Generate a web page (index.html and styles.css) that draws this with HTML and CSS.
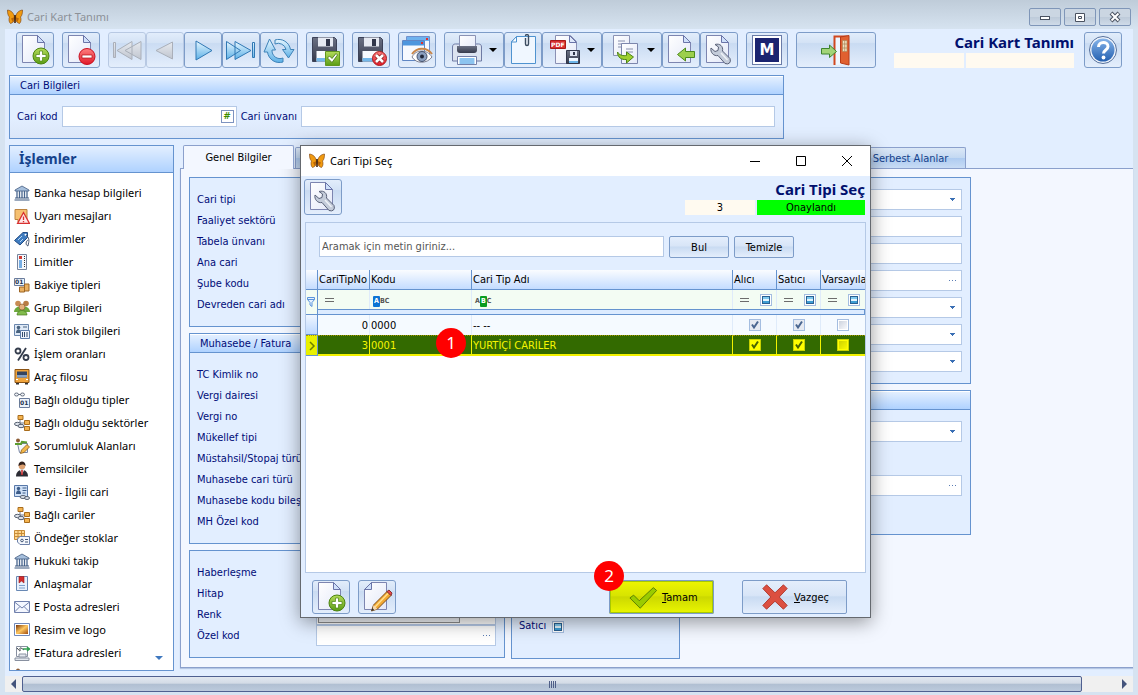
FILE: index.html
```html
<!DOCTYPE html>
<html lang="tr">
<head>
    <meta charset="UTF-8">
    <meta name="viewport" content="width=device-width, initial-scale=1.0">
    <title>Cari Kart Tanımı</title>
    <link rel="stylesheet" href="styles.css">
</head>
<body>

<!-- icon sprite -->
<svg class="sprite" aria-hidden="true">
    <defs>
        <linearGradient id="gPage" x1="0" y1="0" x2="1" y2="1"><stop offset="0" stop-color="#fff"/><stop offset="1" stop-color="#e3e8f8"/></linearGradient>
        <linearGradient id="gBlue" x1="0" y1="0" x2="0" y2="1"><stop offset="0" stop-color="#e6f6ff"/><stop offset="1" stop-color="#5cb0e6"/></linearGradient>
        <linearGradient id="gGray" x1="0" y1="0" x2="0" y2="1"><stop offset="0" stop-color="#e8eaee"/><stop offset="1" stop-color="#bcc1ca"/></linearGradient>
        <linearGradient id="gGreen" x1="0" y1="0" x2="0" y2="1"><stop offset="0" stop-color="#b4dc5a"/><stop offset="1" stop-color="#5a9c14"/></linearGradient>
        <linearGradient id="gRed" x1="0" y1="0" x2="0" y2="1"><stop offset="0" stop-color="#ff8080"/><stop offset="1" stop-color="#e01828"/></linearGradient>
        <linearGradient id="gDark" x1="0" y1="0" x2="0" y2="1"><stop offset="0" stop-color="#6b7184"/><stop offset="1" stop-color="#353a4c"/></linearGradient>
        <linearGradient id="gHelp" x1="0" y1="0" x2="0" y2="1"><stop offset="0" stop-color="#86b4ea"/><stop offset="1" stop-color="#2460b0"/></linearGradient>
        <linearGradient id="gSun" x1="0" y1="0" x2="1" y2="1"><stop offset="0" stop-color="#7a3408"/><stop offset=".5" stop-color="#ffc860"/><stop offset="1" stop-color="#a04c10"/></linearGradient>
    </defs>
    <symbol id="butterfly" viewBox="0 0 16 16">
        <path d="M7.500 8C6.500 3.500 4 1.500 .5 1c0 3 .3 5.500 2 7C1.500 10 2 13.500 3.500 14.500 6 14 7 12 7.500 10z" fill="#f09a10" stroke="#7a3c08" stroke-width=".6"/>
        <path d="M8.500 8C9.500 3.500 12 1.500 15.500 1c0 3-.3 5.500-2 7 1 2 .5 5.500-1 6.500C10 14 9 12 8.500 10z" fill="#f09a10" stroke="#7a3c08" stroke-width=".6"/>
        <path d="M4 9.500 7.500 8 6 13.500zM12 9.500 8.500 8l1.500 5.500z" fill="#b86408"/>
        <path d="M8 6v8" stroke="#402008" stroke-width="1.600"/>
    </symbol>
    <symbol id="page" viewBox="0 0 32 32">
        <path d="M3.500 1.500h15l7 7v20h-22z" fill="url(#gPage)" stroke="#7d85b0"/>
        <path d="M18.500 1.500v7h7z" fill="#cfe0fa" stroke="#6a74a8"/>
    </symbol>
    <symbol id="page-add" viewBox="0 0 32 32">
        <use href="#page"/>
        <circle cx="22" cy="22" r="8" fill="url(#gGreen)" stroke="#4c8410"/>
        <path d="M20.500 17h3v3.500H27v3h-3.500V27h-3v-3.500H17v-3h3.500z" fill="#fff" stroke="#4c8410" stroke-width=".7"/>
    </symbol>
    <symbol id="page-del" viewBox="0 0 32 32">
        <use href="#page"/>
        <circle cx="22" cy="22.500" r="8" fill="url(#gRed)" stroke="#c81020"/>
        <path d="M17 21h10v3H17z" fill="#fff" stroke="#b01018" stroke-width=".7"/>
    </symbol>
    <symbol id="first" viewBox="0 0 32 32">
        <path d="M2.500 8.500h2v15h-2zM21 7.500v18L6 16.500zM30 7.500v18L14 16.500z" fill="url(#gGray)" stroke="#a4a9b2"/>
    </symbol>
    <symbol id="prev" viewBox="0 0 32 32"><path d="M23.500 8v17L7 16.500z" fill="url(#gGray)" stroke="#a4a9b2"/></symbol>
    <symbol id="next" viewBox="0 0 32 32"><path d="M9 7v19l16-9.500z" fill="url(#gBlue)" stroke="#3078b4"/></symbol>
    <symbol id="last" viewBox="0 0 32 32"><path d="M1.500 7.500v18l14-9zM10 7.500v18l16-9zM27.500 8.500h2v15h-2z" fill="url(#gBlue)" stroke="#3078b4"/></symbol>
    <symbol id="refresh" viewBox="0 0 32 32">
        <path d="M12 6a12 12 0 0 1 15.500 9.500H31l-5.500 8.500-6-8.500h3.500A8 8 0 0 0 12 10z" fill="url(#gBlue)" stroke="#3f83b8"/>
        <path d="M20 28A12 12 0 0 1 4.500 18H1l5.500-13 6 11H9a8 8 0 0 0 11 8z" fill="url(#gBlue)" stroke="#3f83b8"/>
    </symbol>
    <symbol id="disk" viewBox="0 0 32 32">
        <path d="M3.500 3.500h22l2 2v22h-24z" fill="url(#gDark)" stroke="#3c4258"/>
        <path d="M9 3.500h15v9H9z" fill="#e6eaf2"/><path d="M17 5h4v7h-4z" fill="#30364a"/>
        <path d="M7.500 17h17v10.500h-17z" fill="#f8fbff"/><path d="M7.500 24h17v3.500h-17z" fill="#74b8ea"/>
    </symbol>
    <symbol id="disk-ok" viewBox="0 0 32 32">
        <use href="#disk"/>
        <path d="M16.500 17.500h14v14h-14z" fill="url(#gGreen)" stroke="#62961e"/>
        <path d="m18.500 24 2-2 2.500 2.500 4-5 1.500 1.500-5.500 7.500z" fill="#fff" stroke="#3f6c10" stroke-width=".8"/>
    </symbol>
    <symbol id="disk-no" viewBox="0 0 32 32">
        <use href="#disk"/>
        <circle cx="24.500" cy="24.500" r="7" fill="url(#gRed)" stroke="#a81c1c"/>
        <path d="m21 21 7 7m0-7-7 7" stroke="#8c2020" stroke-width="4.200"/><path d="m21 21 7 7m0-7-7 7" stroke="#fff" stroke-width="2.600"/>
    </symbol>
    <symbol id="preview" viewBox="0 0 32 32">
        <path d="M5.500 2.500h23v20h-23z" fill="#f4f8ff" stroke="#6f90cc"/><path d="M6 3h22v4H6z" fill="#6fb2ee"/><path d="M25 4h2v2h-2z" fill="#e03030"/>
        <path d="M1.500 6.500h22v20h-22z" fill="#f6f9ff" stroke="#5f86c4"/><path d="M2 7h21v4.500H2z" fill="#4d96de"/><path d="M20 8h2v2h-2z" fill="#e03030"/>
        <path d="M11 23c4-8 15-8 20 0-5 7-16 7-20 0z" fill="#fff" stroke="#7d7f90"/>
        <path d="M11 20c5-7 15-7 20 0" fill="none" stroke="#c8864a" stroke-width="2"/>
        <circle cx="21" cy="22.500" r="5" fill="#8ba0c0" stroke="#44506c"/><circle cx="21" cy="22.500" r="2" fill="#20283c"/>
    </symbol>
    <symbol id="printer" viewBox="0 0 32 32">
        <path d="M1.500 13c0-2 1-3 3-3h23c2 0 3 1 3 3v14h-29z" fill="#dce3f0" stroke="#6f7ba4"/>
        <path d="M8.500 1.500h16v14h-16z" fill="url(#gPage)" stroke="#8a92b4"/>
        <path d="M6 12h20v4q0 3-3 3H9q-3 0-3-3z" fill="url(#gDark)"/>
        <path d="M6.500 22.500h19v8h-19z" fill="#fff" stroke="#7480a8"/><path d="M8.500 24h15v6h-15z" fill="#8cc4f0"/>
    </symbol>
    <symbol id="clip" viewBox="0 0 32 32">
        <path d="M9.500 2.500h19v27h-24v-22z" fill="#f0f7ff" stroke="#4f93d0"/><path d="M4.500 8h5V2.500z" fill="#fff" stroke="#4f93d0"/>
        <path d="M18.500 4v6q0 1.500 1.500 1.500t1.500-1.500V2q0-1.500-1.500-1.500T18.500 2" fill="none" stroke="#3c4c60" stroke-width="1.400"/>
    </symbol>
    <symbol id="pdf" viewBox="0 0 32 32">
        <path d="M6.500 1.500h15l6 6v22h-21z" fill="url(#gPage)" stroke="#8a90b4"/><path d="M20.500 1.500v7h7z" fill="#dfe8fa" stroke="#6a74a8"/>
        <path d="M1.500 6.500h15v8h-15z" fill="#d83030" stroke="#a81818"/>
        <path d="M17.500 16.500h13v13h-13z" fill="url(#gDark)" stroke="#30364a"/><path d="M21 17h7v5h-7z" fill="#dfe5f2"/><path d="M24 18h2v3h-2z" fill="#30364a"/><path d="M20 24h9v5h-9z" fill="#eef6ff"/><path d="M20 27h9v2h-9z" fill="#6cb4e8"/>
    </symbol>
    <symbol id="copy" viewBox="0 0 32 32">
        <path d="M4.500 1.500h16v20h-16z" fill="url(#gPage)" stroke="#8a92b4"/><path d="M9 7h7M9 10h5M9 13h5" stroke="#8890ac"/>
        <path d="M12.500 9.500h16v20h-16z" fill="url(#gPage)" stroke="#7c86ac"/><path d="M17 15h7M17 18h7" stroke="#8890ac"/>
        <path d="M8.500 18c2 3.500 6 4 9 3.500V18l7 5-7 6v-3.500c-5 .5-9-2-9-7.500z" fill="#9ed030" stroke="#4c8414"/>
    </symbol>
    <symbol id="page-in" viewBox="0 0 32 32">
        <use href="#page"/><path d="M12.500 20.500 20.500 14v3.500h9v6h-9V27z" fill="#9ccf4c" stroke="#4c8a1c"/>
    </symbol>
    <symbol id="page-tool" viewBox="0 0 32 32">
        <use href="#page"/>
        <path d="M8 14l4 3.500 3-1 .5-3.500-3.500-2.500c5-1.500 8.500 2 7.500 6.500l7.500 7.500q1 3-.5 4.500t-4.500 .5l-7-8c-4 1-8-3-7-7.500z" fill="#c4ccda" stroke="#596178"/>
        <path d="m18 19 6.500 7" stroke="#eef1f6" stroke-width="1.500"/>
    </symbol>
    <symbol id="page-edit" viewBox="0 0 32 32">
        <path d="M10.500 1.500h15v27h-22v-20z" fill="url(#gPage)" stroke="#7d85b0"/><path d="M3.500 8.500h7v-7z" fill="#cfe0fa" stroke="#6a74a8"/>
        <path d="m10.500 30 2-6L26 10.500l4 4L16.500 28z" fill="#f2a832" stroke="#7c4c18"/><path d="M26 10.500l2-1.500 3 3-1 2.500z" fill="#e8484c" stroke="#8c3030"/><path d="M14 26 27 12.500" stroke="#ffe090" stroke-width="1.400"/><path d="m12.500 24 4 4-5 1.500z" fill="#f6d8b0"/><path d="m10.500 30 .8-3 2 2z" fill="#333"/>
    </symbol>
    <symbol id="exit" viewBox="0 0 32 32">
        <path d="M14.500 31V2.500h12V30" fill="#eef6ff" stroke="#d04820" stroke-width="2"/>
        <path d="M20.500 3 29 1.500V31l-8.500-2z" fill="#e06030" stroke="#b83c18"/><path d="M22.500 6.500h4.500v11h-4.500z" fill="#f0e2c0" stroke="#a88050" stroke-width=".6"/><path d="M24.700 6.500v11M22.500 10h4.500M22.500 14h4.500" stroke="#a88050" stroke-width=".7"/>
        <path d="M1.500 14.500h8V11l7 6.500-7 6V20h-8z" fill="#a2d478" stroke="#3f8430"/>
    </symbol>
    <symbol id="help" viewBox="0 0 32 32">
        <circle cx="16" cy="16" r="13.500" fill="#eef3fb" stroke="#55709c"/><circle cx="16" cy="16" r="11.500" fill="url(#gHelp)"/>
        <path d="M11.500 13c0-6 9.500-6 9.500-.5 0 3.500-4.500 3.500-4.500 7" fill="none" stroke="#fff" stroke-width="3"/><circle cx="16.500" cy="23.500" r="1.900" fill="#fff"/>
    </symbol>
    <symbol id="tick" viewBox="0 0 32 32"><path d="m2 17 4-3 6 6L27 6l3.500 3L13 28z" fill="#9acb00" stroke="#567c00"/></symbol>
    <symbol id="cross" viewBox="0 0 32 32"><path d="M3 7 7 3l9 8.500L25 3l4 4-8.500 9 8.500 9-4 4-9-8.500L7 29l-4-4 8.500-9z" fill="#dc4f40" stroke="#b0382c"/></symbol>
    <symbol id="funnel" viewBox="0 0 10 12"><path d="M1.500 1.500h7v2L6 6.500v4L4 9V6.500l-2.500-3zM1.500 3.500h7" fill="#e4f0ff" stroke="#5a94dc"/></symbol>

    <!-- sidebar, 16px -->
    <symbol id="s-bank" viewBox="0 0 16 16"><path d="M1 6V5l7-4 7 4v1z" fill="#a6bfdc" stroke="#425c80" stroke-width=".8"/><path d="M3 6v7M5.500 6v7M8 6v7M10.500 6v7M13 6v7" stroke="#48668e" stroke-width="1.300"/><path d="M1 13h14M.5 15h15" stroke="#38547c"/></symbol>
    <symbol id="s-warn" viewBox="0 0 16 16"><path d="M1 1.500h12v10H7L4 14v-2.500H1z" fill="#f6c070" stroke="#bc8440"/><path d="m9.500 4.500 6 11h-12z" fill="#ffe8e8" stroke="#d83030" stroke-width="1.300"/><path d="M9.500 8.500v3.500M9.500 13v1.300" stroke="#d83030" stroke-width="1.300"/></symbol>
    <symbol id="s-tag" viewBox="0 0 16 16"><path d="M.5 9.500 9 1.500h4.500v5L6 14z" fill="#3f7cc0" stroke="#234c84"/><circle cx="11.500" cy="3.800" r="1" fill="#fff"/><path d="m4 9 4-4M6 11l3-3" stroke="#b8d8f6"/><path d="M12 4c5 4 2 9 2 11-3-1-2-5 0-6" fill="none" stroke="#4a5872"/></symbol>
    <symbol id="s-limit" viewBox="0 0 16 16"><path d="M3.500.5h9v15h-9z" fill="#f4f7fc" stroke="#76849c"/><path d="M5 2h3v3H5z" fill="#d43c34"/><path d="M5 6h3v8H5z" fill="#76aee4"/><path d="M10.500 2v12" stroke="#333" stroke-dasharray="1 1"/></symbol>
    <symbol id="s-balance" viewBox="0 0 16 16"><path d="M.5 1.500h10v7H.5z" fill="#eef3fa" stroke="#6a7c9c"/><path d="M5.500 10h5v5h-5zM10.500 7h4.500v7h-4.500z" fill="#eab060" stroke="#9c6424"/></symbol>
    <symbol id="s-group" viewBox="0 0 16 16"><circle cx="4" cy="3.500" r="2.800" fill="#c88c54"/><circle cx="12" cy="3.500" r="2.800" fill="#b87c44"/><path d="M0 12c0-8 16-8 16 0z" fill="#6ca83c"/><circle cx="8" cy="7" r="3" fill="#e4b07c" stroke="#8c5c30" stroke-width=".7"/><path d="M3 15c0-6 10-6 10 0z" fill="#82bc4c" stroke="#4c7c24" stroke-width=".7"/></symbol>
    <symbol id="s-stock" viewBox="0 0 16 16"><path d="M.5 1.500h14v11H.5z" fill="#dfe9f6" stroke="#6a86ac"/><circle cx="4.500" cy="4.500" r="1.800" fill="#48627e"/><path d="M2 10c0-5 5-5 5 0z" fill="#48627e"/><path d="M9 4h4" stroke="#48627e"/><path d="M6.500 7.500h9v8h-9z" fill="#eef4fc" stroke="#5c7ca8"/><path d="M8.500 9v5M10.500 9v5M13 9v5" stroke="#344c6c"/></symbol>
    <symbol id="s-percent" viewBox="0 0 16 16"><g fill="none" stroke="#343c4c" stroke-width="1.800"><circle cx="4" cy="5" r="2.500"/><circle cx="12" cy="11.500" r="2.500"/><path d="M12 2 4 14.500"/></g></symbol>
    <symbol id="s-bus" viewBox="0 0 16 16"><path d="M1 .5h14v13H1z" fill="#f0a43c" stroke="#8c5414"/><path d="M3 2.500h10v6H3z" fill="#344460"/><path d="M3 6h10v2.500H3z" fill="#84a0c4"/><path d="M2 10.500h2M12 10.500h2" stroke="#fff"/><path d="M2 14h3v1.500H2zM11 14h3v1.500h-3z" fill="#333"/></symbol>
    <symbol id="s-link" viewBox="0 0 16 16"><g fill="#eef0f4" stroke="#667080"><ellipse cx="2.500" cy="2.500" rx="2" ry="1.500"/><ellipse cx="8.500" cy="2.500" rx="2" ry="1.500"/><path d="M4 2.500h3"/></g><path d="M5.500 6.500h10v9h-10z" fill="#eef3fa" stroke="#6a7c9c"/></symbol>
    <symbol id="s-sector" viewBox="0 0 16 16"><path d="M6 5v3h6M6 8v4h6" fill="none" stroke="#707888"/><g fill="#f4b450" stroke="#a86c1c"><path d="M4 .5h5v4H4zM10.500 5.500h5v4h-5zM10.500 11.500h5v4h-5z"/></g><g fill="#dde2ea" stroke="#566070"><ellipse cx="3.500" cy="9" rx="3" ry="1.700"/><ellipse cx="7" cy="11" rx="3" ry="1.700"/></g></symbol>
    <symbol id="s-area" viewBox="0 0 16 16"><path d="M3.500 5.500h10v9h-8z" fill="#f4f7fc" stroke="#7886a4"/><circle cx="4" cy="2.500" r="2" fill="#8c5c34"/><path d="M1 6h6l1-2 5 .5" fill="none" stroke="#5c9c30" stroke-width="2.200"/><path d="m6.500 15.500 1-3.500L13 6.500l2.500 2.500-5.500 5.500z" fill="#f4b848" stroke="#8c5c1c" stroke-width=".8"/></symbol>
    <symbol id="s-person" viewBox="0 0 16 16"><path d="M2 15.500c0-9 12-9 12 0z" fill="#2c2c34"/><path d="m6 9 2 5 2-5z" fill="#fff"/><path d="M8 9v5" stroke="#c82020" stroke-width="1.500"/><circle cx="8" cy="5" r="3.300" fill="#dca070"/><path d="M4.500 5c-.5-6 7.500-6 7 0C10 3 7 3 4.500 5z" fill="#30201c"/></symbol>
    <symbol id="s-card" viewBox="0 0 16 16"><path d="M.5 1.500h13v11H.5z" fill="#cfe0f6" stroke="#5878a8"/><circle cx="4.500" cy="4.500" r="1.700" fill="#3c5c88"/><path d="M2 10c0-5 5-5 5 0z" fill="#3c5c88"/><path d="M8.500 4h4M8.500 6.500h4M8.500 9h3" stroke="#3c5c88"/><g fill="#dde2ea" stroke="#566070"><ellipse cx="9" cy="13" rx="3" ry="1.500"/><ellipse cx="13" cy="14" rx="2.500" ry="1.500"/></g></symbol>
    <symbol id="s-default" viewBox="0 0 16 16"><path d="M.5.5h10v9H.5zM.5 3.500h10M.5 6.500h10M4 .5v9M7.500.5v9" fill="#ffd890" stroke="#c88c38"/><path d="M3.500 9 6 6.500h9.500v8H6L3.500 12z" fill="#f4f7fc" stroke="#6c80a8"/><circle cx="8" cy="10.500" r="1.300" fill="none" stroke="#445878"/><path d="M11 9.500h3M11 12h3" stroke="#445878"/></symbol>
    <symbol id="s-book" viewBox="0 0 16 16"><path d="M2.500.5h11v14h-11z" fill="#e8f1fc" stroke="#6888b4"/><path d="M5 .5h5V7L7.500 5 5 7z" fill="#d42c2c" stroke="#981c1c" stroke-width=".6"/><path d="M5 9.500h6M5 12h6" stroke="#7ca0cc"/></symbol>
    <symbol id="s-mail" viewBox="0 0 16 16"><path d="M.5 2.500h15v11H.5z" fill="#f4f7ff" stroke="#7080ac"/><path d="m.5 3 7.500 6 7.500-6M.5 13l5.500-5.500M15.500 13 10 7.500" fill="none" stroke="#7080ac"/></symbol>
    <symbol id="s-image" viewBox="0 0 16 16"><path d="M.5 1.500h15v12H.5z" fill="#fff" stroke="#7088b8"/><path d="M2 3h12v9H2z" fill="url(#gSun)"/></symbol>
    <symbol id="s-invoice" viewBox="0 0 16 16"><path d="M2.500 1.500h11v10h-11z" fill="#fff" stroke="#8890a0"/><path d="M3 3q4 5 3 1.500T10 5" fill="none" stroke="#40484c"/><path d="M9 4h7M13 2l2.500 2L13 6" fill="none" stroke="#30a050" stroke-width="1.400"/><path d="M1 13h14v2.500H1zM5 9h7v3H5z" fill="#e4e8ee" stroke="#8890a0"/></symbol>
</svg>

<header class="titlebar">
    <svg class="logo"><use href="#butterfly"/></svg>
    <span class="window-name">Cari Kart Tanımı</span>
    <button type="button" class="win-btn" aria-label="Simge durumuna küçült"><svg viewBox="0 0 12 12"><rect x="1.500" y="5.500" width="9" height="3" fill="#fff" stroke="#4a5260"/></svg></button>
    <button type="button" class="win-btn" aria-label="Önceki boyut"><svg viewBox="0 0 12 12"><path d="M1.500 2.500h9v8h-9zM4.500 5.500h3v2h-3z" fill="#fff" stroke="#4a5260"/></svg></button>
    <button type="button" class="win-btn" aria-label="Kapat"><svg viewBox="0 0 12 12"><path d="m2 2 8 8m0-8-8 8" stroke="#4a5260" stroke-width="4"/><path d="m2.500 2.500 7 7m0-7-7 7" stroke="#fff" stroke-width="2"/></svg></button>
</header>

<main class="window">
    <div class="toolbar">
        <div class="tool-group"><button type="button" class="tool" aria-label="Yeni"><svg><use href="#page-add"/></svg></button></div>
        <div class="tool-group"><button type="button" class="tool" aria-label="Sil"><svg><use href="#page-del"/></svg></button></div>
        <div class="tool-group">
            <button type="button" class="tool off" aria-label="İlk" disabled><svg><use href="#first"/></svg></button>
            <button type="button" class="tool off" aria-label="Önceki" disabled><svg><use href="#prev"/></svg></button>
            <button type="button" class="tool" aria-label="Sonraki"><svg><use href="#next"/></svg></button>
            <button type="button" class="tool" aria-label="Son"><svg><use href="#last"/></svg></button>
            <button type="button" class="tool" aria-label="Yenile"><svg><use href="#refresh"/></svg></button>
        </div>
        <div class="tool-group"><button type="button" class="tool" aria-label="Kaydet"><svg><use href="#disk-ok"/></svg></button></div>
        <div class="tool-group"><button type="button" class="tool" aria-label="Vazgeç"><svg><use href="#disk-no"/></svg></button></div>
        <div class="tool-group"><button type="button" class="tool" aria-label="Önizleme"><svg><use href="#preview"/></svg></button></div>
        <div class="tool-group">
            <button type="button" class="tool drop" aria-label="Yazdır"><svg><use href="#printer"/></svg><span class="caret"></span></button>
            <button type="button" class="tool" aria-label="Ekler"><svg><use href="#clip"/></svg></button>
            <button type="button" class="tool drop" aria-label="PDF kaydet"><svg viewBox="0 0 32 32"><use href="#pdf"/><text x="2" y="13" class="pdf-text">PDF</text></svg><span class="caret"></span></button>
            <button type="button" class="tool drop" aria-label="Kopyala"><svg><use href="#copy"/></svg><span class="caret"></span></button>
            <button type="button" class="tool" aria-label="İçeri al"><svg><use href="#page-in"/></svg></button>
            <button type="button" class="tool" aria-label="Ayarlar"><svg><use href="#page-tool"/></svg></button>
        </div>
        <div class="tool-group"><button type="button" class="tool module"><span>M</span></button></div>
        <div class="tool-group"><button type="button" class="tool exit" aria-label="Çıkış"><svg><use href="#exit"/></svg></button></div>
        <div class="caption">
            <h1>Cari Kart Tanımı</h1>
            <div class="status"><span></span><span></span></div>
        </div>
        <button type="button" class="tool" aria-label="Yardım"><svg><use href="#help"/></svg></button>
    </div>

    <section class="group card-info">
        <h2>Cari Bilgileri</h2>
        <div class="card-row">
            <label for="cariKod">Cari kod</label>
            <div class="field code"><input type="text" id="cariKod"><button type="button" class="hash">#</button></div>
            <label for="cariUnvan">Cari ünvanı</label>
            <div class="field"><input type="text" id="cariUnvan"></div>
        </div>
    </section>

    <div class="columns">
        <nav class="sidebar">
            <h2>İşlemler</h2>
            <ul>
                <li><a href="#"><svg><use href="#s-bank"/></svg>Banka hesap bilgileri</a></li>
                <li><a href="#"><svg><use href="#s-warn"/></svg>Uyarı mesajları</a></li>
                <li><a href="#"><svg><use href="#s-tag"/></svg>İndirimler</a></li>
                <li><a href="#"><svg><use href="#s-limit"/></svg>Limitler</a></li>
                <li><a href="#"><svg viewBox="0 0 16 16"><use href="#s-balance"/><text x="1" y="7" class="num-text">01</text></svg>Bakiye tipleri</a></li>
                <li><a href="#"><svg><use href="#s-group"/></svg>Grup Bilgileri</a></li>
                <li><a href="#"><svg><use href="#s-stock"/></svg>Cari stok bilgileri</a></li>
                <li><a href="#"><svg><use href="#s-percent"/></svg>İşlem oranları</a></li>
                <li><a href="#"><svg><use href="#s-bus"/></svg>Araç filosu</a></li>
                <li><a href="#"><svg viewBox="0 0 16 16"><use href="#s-link"/><text x="6" y="13" class="num-text">01</text></svg>Bağlı olduğu tipler</a></li>
                <li><a href="#"><svg><use href="#s-sector"/></svg>Bağlı olduğu sektörler</a></li>
                <li><a href="#"><svg><use href="#s-area"/></svg>Sorumluluk Alanları</a></li>
                <li><a href="#"><svg><use href="#s-person"/></svg>Temsilciler</a></li>
                <li><a href="#"><svg><use href="#s-card"/></svg>Bayi - İlgili cari</a></li>
                <li><a href="#"><svg><use href="#s-sector"/></svg>Bağlı cariler</a></li>
                <li><a href="#"><svg><use href="#s-default"/></svg>Öndeğer stoklar</a></li>
                <li><a href="#"><svg><use href="#s-bank"/></svg>Hukuki takip</a></li>
                <li><a href="#"><svg><use href="#s-book"/></svg>Anlaşmalar</a></li>
                <li><a href="#"><svg><use href="#s-mail"/></svg>E Posta adresleri</a></li>
                <li><a href="#"><svg><use href="#s-image"/></svg>Resim ve logo</a></li>
                <li><a href="#"><svg><use href="#s-invoice"/></svg>EFatura adresleri</a></li>
                <li><a href="#" aria-label="Diğer"><svg><use href="#s-area"/></svg></a></li>
            </ul>
            <button type="button" class="more" aria-label="Aşağı kaydır"></button>
        </nav>

        <div class="tabs">
            <div class="tab-row">
                <button type="button" class="tab active">Genel Bilgiler</button>
                <button type="button" class="tab wide" aria-label="Diğer sekmeler"></button>
                <button type="button" class="tab">Serbest Alanlar</button>
            </div>
            <div class="tab-page">
                <div class="form-left">
                    <section class="group rows">
                        <label for="tip">Cari tipi</label><select id="tip"></select>
                        <label for="sektor">Faaliyet sektörü</label><select id="sektor"></select>
                        <label for="tabela">Tabela ünvanı</label><input type="text" id="tabela">
                        <label for="ana">Ana cari</label><input type="text" id="ana">
                        <label for="sube">Şube kodu</label><input type="text" id="sube">
                        <label for="devreden">Devreden cari adı</label><input type="text" id="devreden">
                    </section>
                    <section class="group">
                        <h2>Muhasebe / Fatura</h2>
                        <div class="rows">
                            <label for="tc">TC Kimlik no</label><input type="text" id="tc">
                            <label for="daire">Vergi dairesi</label><input type="text" id="daire">
                            <label for="vergi">Vergi no</label><input type="text" id="vergi">
                            <label for="mukellef">Mükellef tipi</label><select id="mukellef"></select>
                            <label for="stopaj">Müstahsil/Stopaj türü</label><select id="stopaj"></select>
                            <label for="mtur">Muhasebe cari türü</label><select id="mtur"></select>
                            <label for="mkod">Muhasebe kodu bileşeni</label><input type="text" id="mkod">
                            <label for="mh">MH Özel kod</label><input type="text" id="mh">
                        </div>
                    </section>
                    <section class="group rows">
                        <label for="haber">Haberleşme</label><select id="haber"></select>
                        <label for="hitap">Hitap</label><input type="text" id="hitap">
                        <label for="renk">Renk</label><div class="field"><button type="button" id="renk" class="swatch" aria-label="Renk"></button></div>
                        <label for="ozel">Özel kod</label><div class="field"><input type="text" id="ozel"><button type="button" class="dots" aria-label="Seç"></button></div>
                    </section>
                </div>
                <div class="form-right">
                    <section class="group stack">
                        <select aria-label="Alan 1"></select>
                        <input type="text" aria-label="Alan 2">
                        <input type="text" aria-label="Alan 3">
                        <div class="field"><input type="text" aria-label="Alan 4"><button type="button" class="dots" aria-label="Seç"></button></div>
                        <select aria-label="Alan 5"></select>
                        <select aria-label="Alan 6"></select>
                        <select aria-label="Alan 7"></select>
                    </section>
                    <section class="group">
                        <h2></h2>
                        <div class="stack spaced">
                            <select aria-label="Alan 8"></select>
                            <div class="field"><input type="text" aria-label="Alan 9"><button type="button" class="dots" aria-label="Seç"></button></div>
                        </div>
                    </section>
                    <section class="group kinds">
                        <label for="satici">Satıcı</label><input type="checkbox" class="tri" id="satici">
                    </section>
                </div>
            </div>
        </div>
    </div>

    <div class="scrollbar">
        <button type="button" class="arrow left" aria-label="Sola"></button>
        <div class="thumb"><span></span></div>
        <button type="button" class="arrow right" aria-label="Sağa"></button>
    </div>
</main>

<div class="dialog" role="dialog" aria-labelledby="dialogName">
    <header class="dialog-title">
        <svg class="logo"><use href="#butterfly"/></svg>
        <span id="dialogName">Cari Tipi Seç</span>
        <button type="button" aria-label="Simge durumuna küçült"><svg viewBox="0 0 12 12"><path d="M1 6.500h10" stroke="#000"/></svg></button>
        <button type="button" aria-label="Ekranı kapla"><svg viewBox="0 0 12 12"><path d="M1.500 1.500h9v9h-9z" fill="none" stroke="#000"/></svg></button>
        <button type="button" aria-label="Kapat"><svg viewBox="0 0 12 12"><path d="m1 1 10 10m0-10L1 11" stroke="#000"/></svg></button>
    </header>
    <div class="dialog-top">
        <button type="button" class="tool" aria-label="Ayarlar"><svg><use href="#page-tool"/></svg></button>
        <div class="caption">
            <h1>Cari Tipi Seç</h1>
            <div class="status"><span>3</span><span class="ok">Onaylandı</span></div>
        </div>
    </div>
    <div class="picker">
        <div class="search">
            <input type="text" aria-label="Arama" placeholder="Aramak için metin giriniz...">
            <button type="button" class="btn">Bul</button>
            <button type="button" class="btn">Temizle</button>
        </div>
        <table>
            <colgroup>
                <col class="c-mark"><col class="c-no"><col class="c-code"><col><col class="c-flag"><col class="c-flag"><col class="c-flag">
            </colgroup>
            <thead>
                <tr><th></th><th>CariTipNo</th><th>Kodu</th><th>Cari Tip Adı</th><th>Alıcı</th><th>Satıcı</th><th>Varsayılan</th></tr>
                <tr class="filter">
                    <td rowspan="2" class="mark"><svg class="funnel"><use href="#funnel"/></svg></td>
                    <td><span class="eq"></span></td>
                    <td><span class="abc"><b>A</b>BC</span></td>
                    <td><span class="abc mid">A<b>B</b>C</span></td>
                    <td><div class="flag"><span class="eq"></span><input type="checkbox" class="tri" aria-label="Alıcı filtresi"></div></td>
                    <td><div class="flag"><span class="eq"></span><input type="checkbox" class="tri" aria-label="Satıcı filtresi"></div></td>
                    <td><div class="flag"><span class="eq"></span><input type="checkbox" class="tri" aria-label="Varsayılan filtresi"></div></td>
                </tr>
                <tr class="split"><td colspan="6"></td></tr>
            </thead>
            <tbody>
                <tr>
                    <td class="mark"></td><td class="no">0</td><td>0000</td><td>-- --</td>
                    <td class="check"><input type="checkbox" aria-label="Alıcı" checked></td>
                    <td class="check"><input type="checkbox" aria-label="Satıcı" checked></td>
                    <td class="check"><input type="checkbox" aria-label="Varsayılan"></td>
                </tr>
                <tr class="selected">
                    <td class="mark"><svg viewBox="0 0 8 10"><path d="m2 1 4 4-4 4" fill="none" stroke="#6c8000" stroke-width="1.500"/></svg></td><td class="no">3</td><td>0001</td><td>YURTİÇİ CARİLER</td>
                    <td class="check"><input type="checkbox" aria-label="Alıcı" checked></td>
                    <td class="check"><input type="checkbox" aria-label="Satıcı" checked></td>
                    <td class="check"><input type="checkbox" aria-label="Varsayılan"></td>
                </tr>
            </tbody>
        </table>
    </div>
    <footer class="dialog-foot">
        <button type="button" class="tool" aria-label="Yeni"><svg><use href="#page-add"/></svg></button>
        <button type="button" class="tool" aria-label="Düzenle"><svg><use href="#page-edit"/></svg></button>
        <button type="button" class="btn big accept"><svg><use href="#tick"/></svg><span><u>T</u>amam</span></button>
        <button type="button" class="btn big"><svg><use href="#cross"/></svg><span><u>V</u>azgeç</span></button>
    </footer>
    <span class="step one">1</span>
    <span class="step two">2</span>
</div>

</body>
</html>
```
FILE: styles.css
```css
* {
    box-sizing: border-box;
}

body {
    margin: 0;
    height: 100vh;
    display: flex;
    flex-direction: column;
    overflow: hidden;
    background: #d6e3f1;
    color: #000c78;
    font-family: "DejaVu Sans Condensed", "Noto Sans", sans-serif;
    font-size: 11px;
    line-height: 15px;
}

h1, h2, ul {
    margin: 0;
    padding: 0;
}

button, input, select {
    margin: 0;
    padding: 0;
    border: 0;
    border-radius: 0;
    background: none;
    color: inherit;
    font: inherit;
}

.sprite {
    position: absolute;
    width: 0;
    height: 0;
}

.pdf-text {
    font: bold 6px "DejaVu Sans", sans-serif;
    fill: #fff;
}

.num-text {
    font: bold 6px "DejaVu Sans", sans-serif;
    fill: #223450;
}

/* title bar */
.titlebar {
    display: flex;
    align-items: center;
    gap: 3px;
    height: 29px;
    flex: none;
    padding: 5px 7px 0;
    background: linear-gradient(#bfccd9, #d6e3f0);
}

.logo {
    width: 16px;
    height: 16px;
    flex: none;
}

.window-name {
    flex: 1;
    padding-left: 1px;
    color: #8c9197;
    font: 11px/16px "Noto Sans", sans-serif;
}

.win-btn {
    width: 32px;
    height: 18px;
    border: 1px solid #7f96b8;
    border-radius: 2px;
    background: linear-gradient(#cbd6e2 50%, #bdcad9 50%, #cfdbe8);
    display: flex;
    align-items: center;
    justify-content: center;
}

.win-btn svg {
    width: 12px;
    height: 12px;
}

.window {
    flex: 1;
    min-height: 0;
    display: flex;
    flex-direction: column;
    margin: 0 5px 3px;
    background: #e2eeff;
}

/* toolbar */
.toolbar {
    display: flex;
    gap: 8px;
    padding: 3px 11px 7px;
}

.tool-group {
    display: flex;
}

.tool {
    width: 38px;
    height: 36px;
    flex: none;
    border: 1px solid #7d9cc8;
    border-radius: 3px;
    background: linear-gradient(#e2edfb, #d3e2f5 30%, #c9dbf2 31%, #e4eefc);
    display: flex;
    align-items: center;
    justify-content: center;
}

.tool svg {
    width: 32px;
    height: 32px;
}

.tool.off {
    border-color: #b4c6e0;
    opacity: 0.9;
}

.tool.drop {
    width: 60px;
    justify-content: flex-start;
    padding-left: 6px;
    gap: 6px;
}

.caret {
    border: 4px solid transparent;
    border-top-color: #000;
    border-bottom: 0;
}

.tool.module {
    width: 42px;
}

.module span {
    width: 28px;
    height: 28px;
    border: 2px solid #fff;
    outline: 1px solid #6a7ca8;
    background: #1b2470;
    color: #fff;
    font: bold 15px/24px "DejaVu Sans", sans-serif;
}

.tool.exit {
    width: 80px;
}

.caption {
    margin-left: auto;
    text-align: right;
}

.caption h1 {
    font: bold 15px/21px "Noto Sans", sans-serif;
    color: #00106e;
}

.status {
    display: flex;
    justify-content: flex-end;
    gap: 2px;
    color: #000;
    text-align: center;
}

.status span {
    width: 70px;
    height: 15px;
    background: #fffaf0;
}

.status span + span {
    width: 108px;
}

.status .ok {
    background: #0f0;
}

.toolbar > .tool {
    margin-left: 2px;
}

/* boxes */
.group {
    border: 1px solid #6593cf;
    background: #e2eeff;
}

.group h2 {
    height: 19px;
    padding-left: 10px;
    border-bottom: 1px solid #6593cf;
    border-top: 1px solid #fff;
    background: linear-gradient(#e3efff, #afd2ff);
    font-size: 11px;
    font-weight: normal;
    line-height: 17px;
}

.card-info {
    width: 775px;
    max-width: 100%;
    margin-left: 4px;
    background: linear-gradient(#e2eeff 70%, #dbe6f8);
}

.card-row {
    display: flex;
    align-items: center;
    gap: 4px;
    padding: 11px 8px 11px 7px;
}

.card-row .field {
    flex: 1;
}

.card-row .code {
    flex: 0 0 175px;
}

.field,
.rows > input,
.rows > select,
.stack > input,
.stack > select,
.search input {
    width: 100%;
    height: 21px;
    border: 1px solid #b5c9e6;
    background-color: #fff;
    appearance: none;
}

.field {
    display: flex;
    align-items: center;
}

.field input {
    flex: 1;
    min-width: 0;
}

.hash {
    width: 13px;
    height: 13px;
    margin-right: 2px;
    border: 1px solid #7d93c0;
    color: #3c8c00;
    font: bold 9px/11px "DejaVu Sans", sans-serif;
}

.rows > select,
.stack > select {
    background-image: url("data:image/svg+xml,%3Csvg xmlns='http://www.w3.org/2000/svg' width='5' height='3'%3E%3Cpath d='M0 0h5v1H0zM1 1h3v1H1zM2 2h1v1H2z' fill='%233a6fb4'/%3E%3C/svg%3E");
    background-repeat: no-repeat;
    background-position: right 6px center;
}

.dots {
    width: 18px;
    height: 19px;
    background: linear-gradient(90deg, #5a7cb4 1px, transparent 1px 3px, #5a7cb4 3px 4px, transparent 4px 6px, #5a7cb4 6px) center / 7px 1px no-repeat;
}

/* main columns */
.columns {
    flex: 1;
    min-height: 0;
    display: flex;
    gap: 6px;
    margin-top: 6px;
    padding-left: 4px;
}

.sidebar {
    position: relative;
    width: 165px;
    flex: none;
    overflow: hidden;
    border: 1px solid #6593cf;
    background: #fff;
}

.sidebar h2 {
    height: 27px;
    padding-left: 9px;
    border-bottom: 1px solid #6593cf;
    background: linear-gradient(#e3efff, #afd2ff);
    color: #15428b;
    font: bold 14px/26px "Noto Sans", sans-serif;
}

.sidebar ul {
    padding-top: 8px;
    list-style: none;
}

.sidebar a {
    display: flex;
    align-items: center;
    gap: 4px;
    height: 23px;
    padding-left: 4px;
    color: #000;
    font: 11px/16px "Noto Sans", sans-serif;
    text-decoration: none;
    white-space: nowrap;
}

.sidebar svg {
    width: 16px;
    height: 16px;
}

.more {
    position: absolute;
    right: 10px;
    bottom: 10px;
    border: 4px solid transparent;
    border-top-color: #3f78bf;
    border-bottom: 0;
}

.tabs {
    flex: 1;
    min-width: 0;
    display: flex;
    flex-direction: column;
    margin-bottom: 3px;
}

.tab-row {
    display: flex;
    align-items: flex-end;
    height: 23px;
    flex: none;
    padding: 0 167px 0 3px;
    gap: 1px;
}

.tab {
    width: 111px;
    height: 21px;
    flex: none;
    border: 1px solid #8ba0cc;
    border-bottom: 0;
    border-radius: 2px 2px 0 0;
    background: linear-gradient(#dce8f7, #c3d8f2 50%, #aecbf0 51%, #c8dcf5);
    color: #15428b;
}

.tab.wide {
    flex: 1;
}

.tab.active {
    position: relative;
    z-index: 1;
    height: 24px;
    margin-bottom: -1px;
    background: #f3f7ff;
    color: #000;
}

.tab-page {
    flex: 1;
    min-height: 0;
    display: grid;
    grid-template-columns: minmax(0, 316px) minmax(0, 460px);
    gap: 6px;
    padding: 8px;
    border: 1px solid #8ba0cc;
    border-right: 0;
    background: #f3f7ff;
    box-shadow: 0 1px 1px #b4c6e4;
}

.form-left,
.form-right {
    display: flex;
    flex-direction: column;
    gap: 6px;
}

.rows {
    display: grid;
    grid-template-columns: 119px 1fr;
    grid-auto-rows: 21px;
    align-items: center;
    padding: 11px 8px 11px 7px;
    white-space: nowrap;
}

.swatch {
    width: 142px;
    height: 17px;
    margin-left: 1px;
    border: 1px solid #8f8f8f;
    background: #f4f6fa;
}

.stack {
    display: flex;
    flex-direction: column;
    gap: 6px;
    padding: 11px 8px;
}

.stack.spaced {
    gap: 33px;
    padding-bottom: 38px;
}

.kinds {
    flex: 1;
    width: 169px;
    display: flex;
    align-items: flex-end;
    gap: 6px;
    padding: 0 7px 25px;
}

/* check boxes */
input[type="checkbox"] {
    width: 12px;
    height: 12px;
    display: block;
    appearance: none;
    border: 1px solid #a4bde0;
    background: linear-gradient(135deg, #cdd3de, #f8f9fc) center / 8px 8px no-repeat #fff;
}

input[type="checkbox"]:checked {
    background: url("data:image/svg+xml,%3Csvg xmlns='http://www.w3.org/2000/svg' width='10' height='10'%3E%3Cpath d='M2 4.500l2 3 4-6' fill='none' stroke='%234a6690' stroke-width='2'/%3E%3C/svg%3E") #e6eaf2;
}

input.tri {
    background: linear-gradient(#7cc8ee 3px, #e2f4fd 3px 5px, #3c9ed4 5px) center / 8px 8px no-repeat #fff;
    box-shadow: inset 0 0 0 1px #fff, inset 0 0 0 2px #2a6090;
}

/* horizontal scroll bar */
.scrollbar {
    display: flex;
    align-items: center;
    height: 16px;
    flex: none;
    margin-top: 5px;
    background: #f0f0f0;
}

.arrow {
    width: 17px;
    height: 16px;
    display: flex;
    align-items: center;
    justify-content: center;
}

.arrow::before {
    content: "";
    border: 5px solid transparent;
}

.arrow.left::before {
    border-right-color: #44547c;
    border-left: 0;
}

.arrow.right::before {
    border-left-color: #44547c;
    border-right: 0;
}

.thumb {
    flex: 1;
    height: 16px;
    margin-right: 34px;
    border: 1px solid #4f6090;
    border-radius: 2px;
    background: linear-gradient(#e2e8f0, #d3dbe6 45%, #b0bfd2 50%, #bccadc);
    display: flex;
    align-items: center;
    justify-content: center;
}

.thumb span {
    width: 7px;
    height: 7px;
    background: repeating-linear-gradient(90deg, #4f5f88 0 1px, transparent 1px 2px);
}

/* dialog */
.dialog {
    position: absolute;
    left: 300px;
    top: 145px;
    width: 571px;
    height: 473px;
    display: flex;
    flex-direction: column;
    border: 1px solid #65696f;
    background: #e2eeff;
    box-shadow: 0 4px 18px rgba(0, 0, 0, 0.4);
}

.dialog-title {
    display: flex;
    align-items: center;
    height: 30px;
    flex: none;
    padding-left: 8px;
    background: #fff;
    color: #000;
    font: 11px/16px "Noto Sans", sans-serif;
}

.dialog-title span {
    flex: 1;
    padding-left: 5px;
}

.dialog-title button {
    width: 46px;
    height: 28px;
    display: flex;
    align-items: center;
    justify-content: center;
}

.dialog-title button svg {
    width: 12px;
    height: 12px;
}

.dialog-top {
    display: flex;
    padding: 3px 5px 7px 3px;
}

.picker {
    flex: 1;
    min-height: 0;
    margin: 0 4px;
    border: 1px solid #b5c9e6;
    background: #fff;
}

.search {
    display: flex;
    gap: 5px;
    padding: 13px 71px 12px 13px;
    background: #e2eeff;
}

.search input {
    flex: 1;
    padding-left: 2px;
    color: #000;
}

.search input::placeholder {
    color: #555;
    opacity: 1;
}

.btn {
    width: 60px;
    height: 22px;
    border: 1px solid #7d9cc8;
    border-radius: 2px;
    background: linear-gradient(#e4eefc, #d8e5f7 45%, #c9dbf2 50%, #e4eefc);
    color: #000;
}

table {
    width: 100%;
    table-layout: fixed;
    border-collapse: separate;
    border-spacing: 0;
    color: #000;
}

.c-mark {
    width: 12px;
}

.c-no {
    width: 52px;
}

.c-code {
    width: 102px;
}

.c-flag {
    width: 44px;
}

th, td {
    height: 20px;
    padding: 0 1px;
    overflow: hidden;
    text-align: left;
    font-weight: normal;
    white-space: nowrap;
    border-right: 1px solid #dfebfa;
}

th {
    border-right-color: #6593cf;
    border-bottom: 1px solid #6593cf;
    background: linear-gradient(#fafcff, #c4dcff);
}

th:last-child,
td:last-child {
    border-right: 0;
}

td.mark,
.selected td.mark {
    padding: 0;
    border-right: 1px solid #6593cf;
    border-bottom: 1px solid #6593cf;
    background: linear-gradient(#f0f6ff, #bcd8ff);
}

.filter td {
    height: 19px;
    background: #f3fcf3;
}

.filter .eq {
    margin-left: 6px;
}

.funnel {
    display: block;
    width: 10px;
    height: 12px;
}

.eq {
    display: block;
    width: 9px;
    height: 4px;
    border: solid #6c6c6c;
    border-width: 1px 0;
}

.abc {
    margin-left: 2px;
    color: #555;
    font: bold 7px/11px "DejaVu Sans Condensed", sans-serif;
}

.abc b {
    display: inline-block;
    padding: 0 1px;
    border-radius: 1px;
    background: #0c74d4;
    color: #fff;
}

.abc.mid b {
    background: #0a9c20;
}

.flag {
    display: flex;
    align-items: center;
    gap: 11px;
}

.split td {
    height: 6px;
    border: 1px solid #6593cf;
    border-left: 0;
    background: #dcebff;
}

tbody td {
    background: #f5faff;
}

.no {
    text-align: right;
}

.check input {
    margin: 0 auto;
}

.selected td {
    height: 21px;
    border-color: #f2f200;
    border-bottom: 2px solid #f2f200;
    border-top: 1px dotted #a89800;
    background: #336a00;
    color: #f6f600;
}

.selected td.mark {
    background: #e8f000;
}

.selected svg {
    display: block;
    width: 8px;
    height: 10px;
    margin: 0 auto;
}

.selected input[type="checkbox"] {
    border-color: #c8d000;
    background-color: #ff0;
    background-blend-mode: multiply;
}

.dialog-foot {
    display: flex;
    align-items: center;
    gap: 8px;
    padding: 7px 23px 3px 11px;
}

.dialog-foot .tool {
    height: 34px;
}

.btn.big {
    width: 105px;
    height: 34px;
    display: flex;
    align-items: center;
    gap: 4px;
    padding-left: 17px;
}

.big svg {
    width: 30px;
    height: 30px;
}

.accept {
    margin-left: auto;
    margin-right: 20px;
}

.btn.accept {
    border: 2px solid #a8c800;
    outline: 1px solid #7d9cc8;
    outline-offset: -1px;
    background: linear-gradient(#ecf400, #d8e400 45%, #ccd800 50%, #e8f400);
}

/* numbered step marks, over the dialog */
.step {
    position: absolute;
    width: 30px;
    height: 30px;
    border-radius: 50%;
    background: #f00;
    color: #fff;
    font: 17px/30px "Noto Sans", sans-serif;
    text-align: center;
}

.one {
    left: 135px;
    top: 182px;
}

.two {
    left: 293px;
    top: 415px;
}
```
